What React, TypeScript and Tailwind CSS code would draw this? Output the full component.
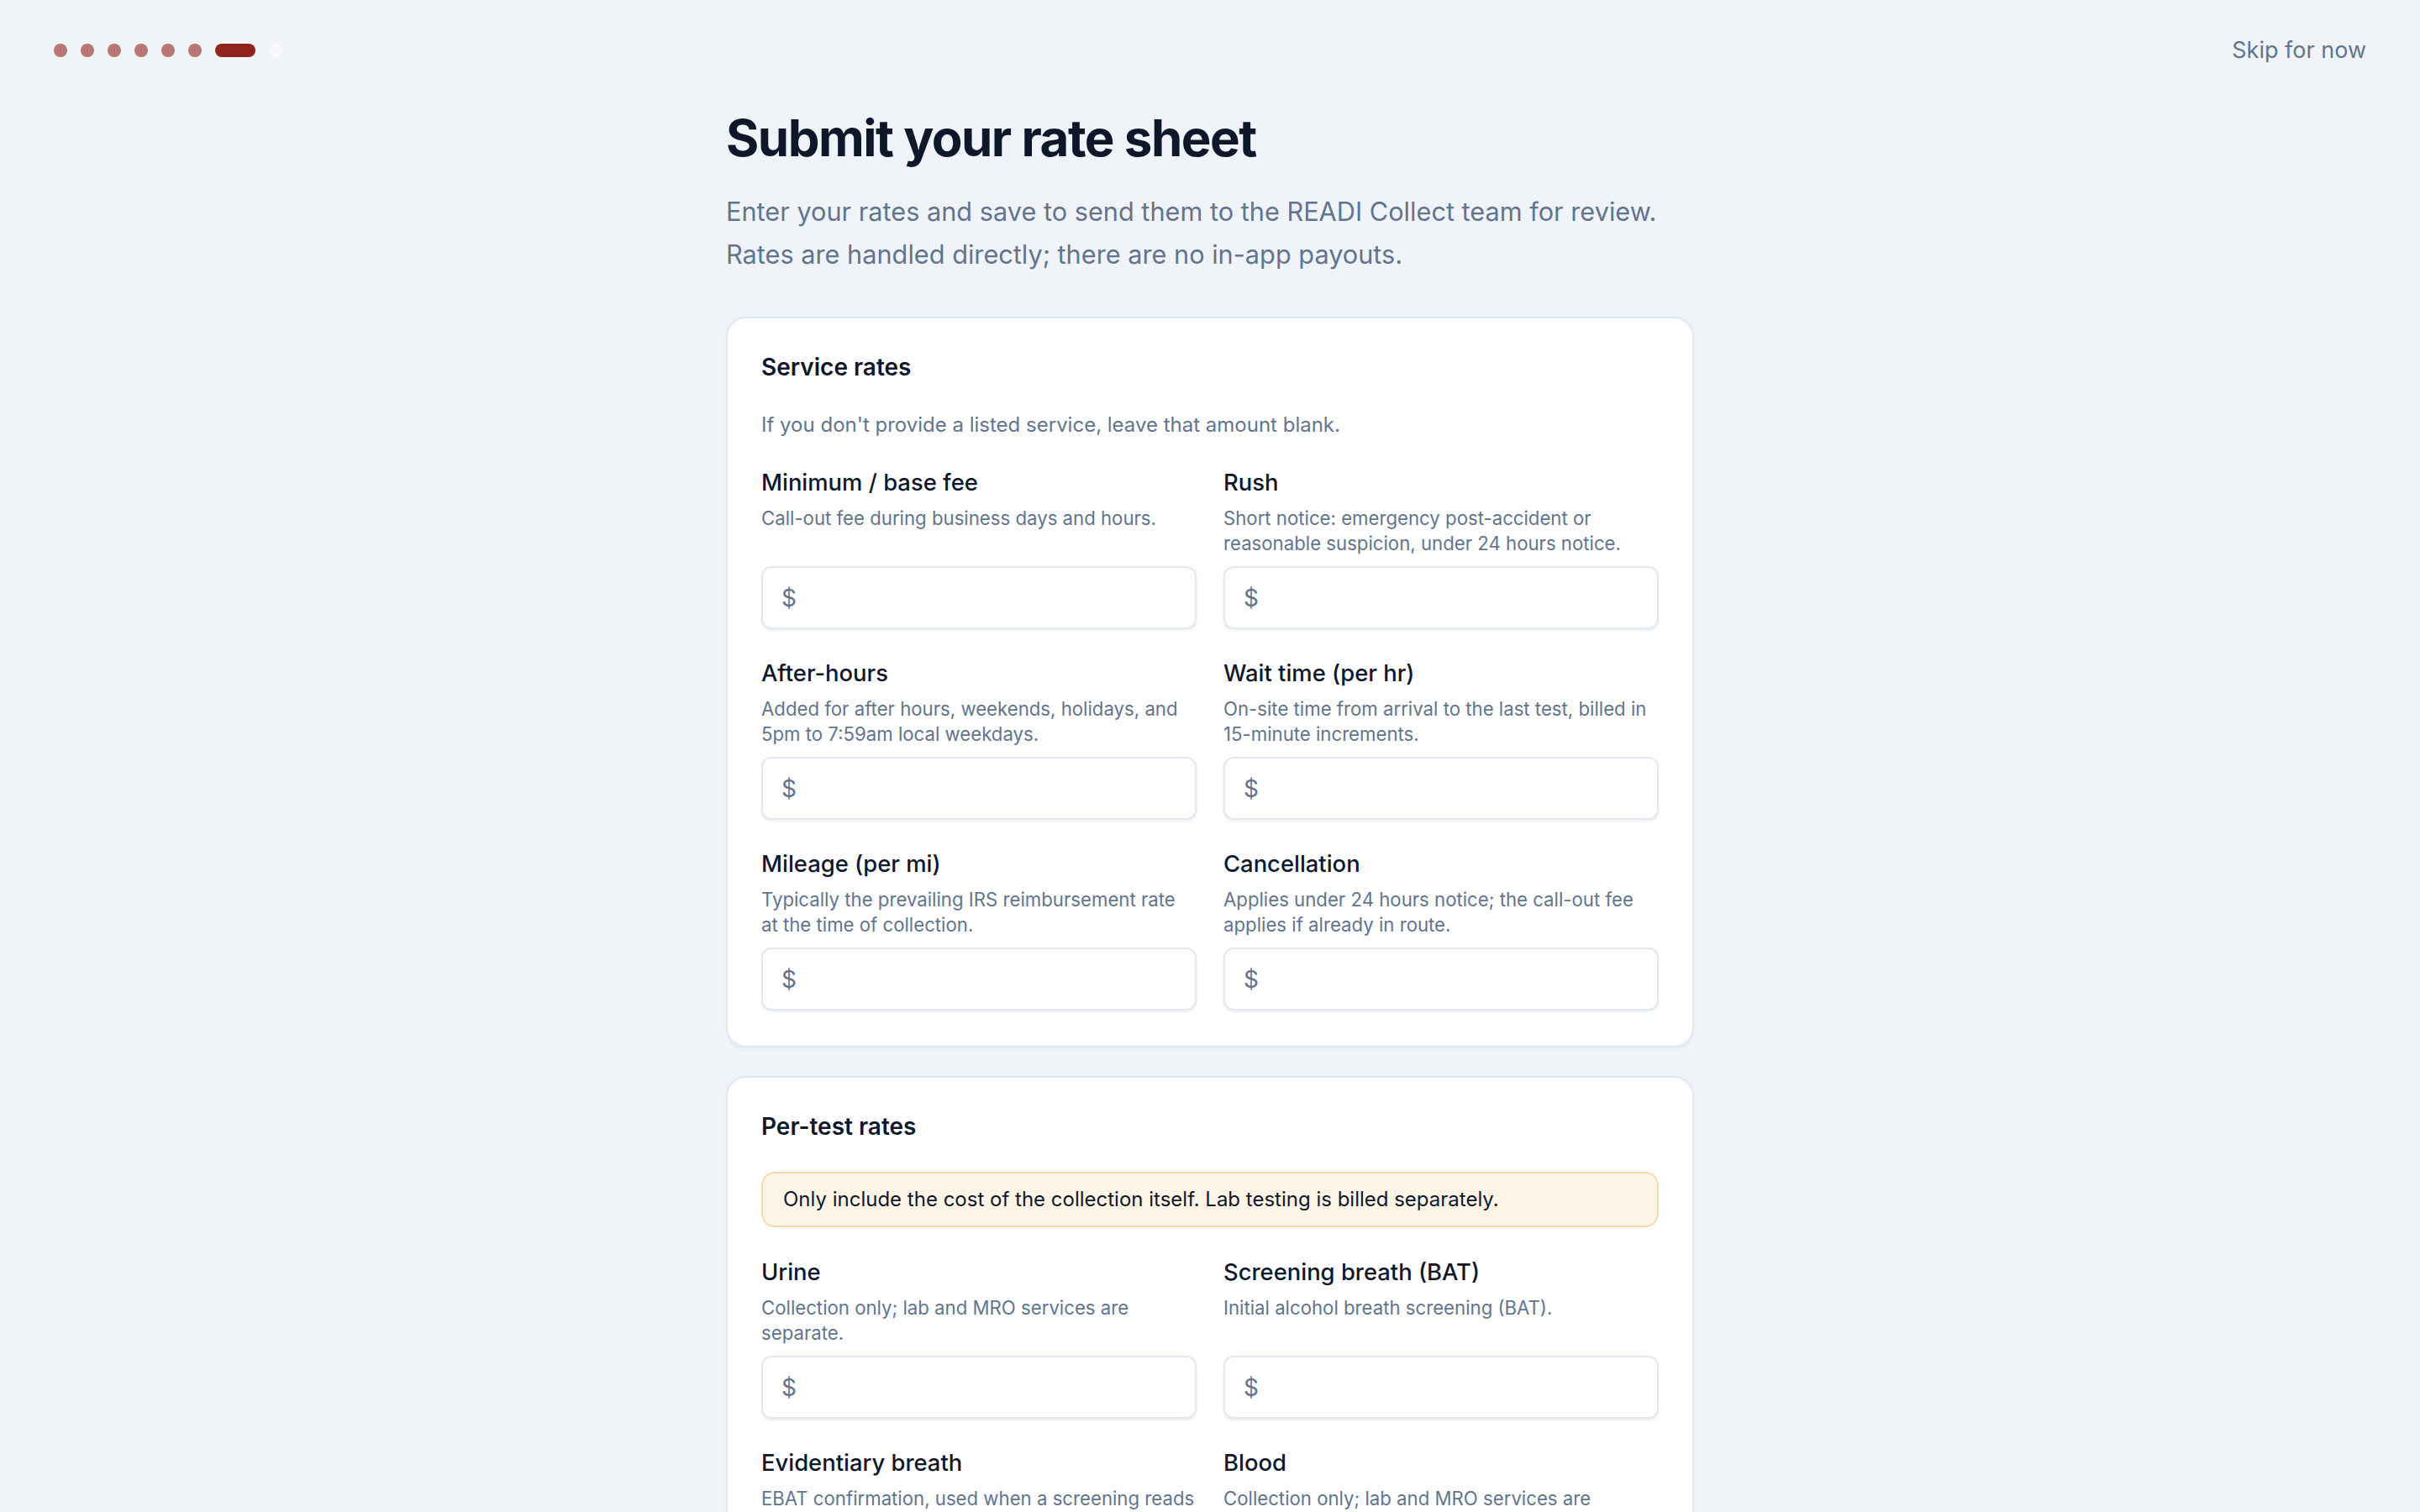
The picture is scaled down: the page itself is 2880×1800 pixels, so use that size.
import { useState } from 'react';

type Field = {
  id: string;
  label: string;
  hint: string;
};

const serviceFields: Field[] = [
  { id: 'base', label: 'Minimum / base fee', hint: 'Call-out fee during business days and hours.' },
  { id: 'rush', label: 'Rush', hint: 'Short notice: emergency post-accident or reasonable suspicion, under 24 hours notice.' },
  { id: 'after', label: 'After-hours', hint: 'Added for after hours, weekends, holidays, and 5pm to 7:59am local weekdays.' },
  { id: 'wait', label: 'Wait time (per hr)', hint: 'On-site time from arrival to the last test, billed in 15-minute increments.' },
  { id: 'mileage', label: 'Mileage (per mi)', hint: 'Typically the prevailing IRS reimbursement rate at\u00a0the time of collection.' },
  { id: 'cancel', label: 'Cancellation', hint: 'Applies under 24 hours notice; the call-out fee applies if already in route.' },
];

const testFields: Field[] = [
  { id: 'urine', label: 'Urine', hint: 'Collection only; lab and MRO services are separate.' },
  { id: 'bat', label: 'Screening breath (BAT)', hint: 'Initial alcohol breath screening (BAT).' },
  { id: 'ebat', label: 'Evidentiary breath', hint: 'EBAT confirmation, used when a screening reads 0.02 or higher.' },
  { id: 'blood', label: 'Blood', hint: 'Collection only; lab and MRO services are separate.' },
  { id: 'hair', label: 'Hair', hint: 'Collection only; lab and MRO services are separate.' },
  { id: 'oral', label: 'Oral fluid', hint: 'Collection only; lab and MRO services are separate.' },
];

function StepDots({ total, current }: { total: number; current: number }) {
  return (
    <div className="flex items-center gap-4">
      {Array.from({ length: total }).map((_, i) =>
        i === current ? (
          <span key={i} className="h-4 w-12 rounded-full bg-[#922420]" />
        ) : (
          <span
            key={i}
            className={`h-4 w-4 rounded-full ${i < current ? 'bg-[#ba7577]' : 'bg-[#f7f9fc]'}`}
          />
        )
      )}
    </div>
  );
}

function RateInput({
  field,
  value,
  onChange,
}: {
  field: Field;
  value: string;
  onChange: (v: string) => void;
}) {
  return (
    <div className="flex flex-col">
      <label htmlFor={field.id} className="text-[27.4px] font-medium leading-[40px] text-slate-900">
        {field.label}
      </label>
      <p className="mt-2 mb-3 text-[22.2px] leading-[30px] text-slate-500">{field.hint}</p>
      <div className="mt-auto flex h-[75px] items-center rounded-xl border-2 border-slate-200 bg-white pl-[22px] shadow-[0_2px_3px_rgba(15,23,42,0.07)]">
        <span className="text-[28px] text-slate-500">$</span>
        <input
          id={field.id}
          value={value}
          onChange={(e) => onChange(e.target.value)}
          inputMode="decimal"
          className="h-full w-full bg-transparent pl-3 pr-6 text-[28px] text-slate-900 outline-none"
        />
      </div>
    </div>
  );
}

function Section({
  title,
  children,
}: {
  title: string;
  children: React.ReactNode;
}) {
  return (
    <section className="rounded-3xl border-2 border-slate-200 bg-white px-10 pt-10 pb-[42px] shadow-[0_2px_4px_rgba(15,23,42,0.04)]">
      <h2 className="text-[28px] font-semibold leading-[36px] text-slate-900">{title}</h2>
      {children}
    </section>
  );
}

export default function App() {
  const [rates, setRates] = useState<Record<string, string>>({});

  const setRate = (id: string) => (v: string) => setRates((r) => ({ ...r, [id]: v }));

  return (
    <div className="min-h-screen bg-[#f0f4f9] font-['Inter',sans-serif] antialiased">
      <header className="flex h-[120px] items-center justify-between px-16">
        <StepDots total={8} current={6} />
        <button className="text-[27px] text-slate-500 hover:text-slate-700">Skip for now</button>
      </header>

      <main className="mx-auto max-w-[1152px] pb-32 pt-2">
        <h1 className="text-[60px] font-bold leading-[72px] tracking-tight text-slate-900">
          Submit your rate sheet
        </h1>
        <p className="mt-[26px] text-[30.7px] leading-[51px] text-slate-500">
          Enter your rates and save to send them to the READI Collect team for review.
          <br />
          Rates are handled directly; there are no in-app payouts.
        </p>

        <div className="mt-[49px] space-y-[34px]">
          <Section title="Service rates">
            <p className="mt-[35px] text-[24px] leading-8 text-slate-500">
              If you don't provide a listed service, leave that amount blank.
            </p>
            <div className="mt-8 grid grid-cols-2 gap-x-8 gap-y-8">
              {serviceFields.map((f) => (
                <RateInput key={f.id} field={f} value={rates[f.id] ?? ''} onChange={setRate(f.id)} />
              ))}
            </div>
          </Section>

          <Section title="Per-test rates">
            <div className="mt-9 rounded-2xl border-2 border-[#f8d8a4] bg-[#fff5e6] px-6 py-[15px] text-[24px] leading-8 text-slate-900">
              Only include the cost of the collection itself. Lab testing is billed separately.
            </div>
            <div className="mt-[33px] grid grid-cols-2 gap-x-8 gap-y-8">
              {testFields.map((f) => (
                <RateInput key={f.id} field={f} value={rates[f.id] ?? ''} onChange={setRate(f.id)} />
              ))}
            </div>
          </Section>

          <div className="flex justify-end pt-4">
            <button className="rounded-xl bg-[#922420] px-8 py-4 text-[28px] font-medium text-white shadow-sm">
              Save rates
            </button>
          </div>
        </div>
      </main>
    </div>
  );
}
